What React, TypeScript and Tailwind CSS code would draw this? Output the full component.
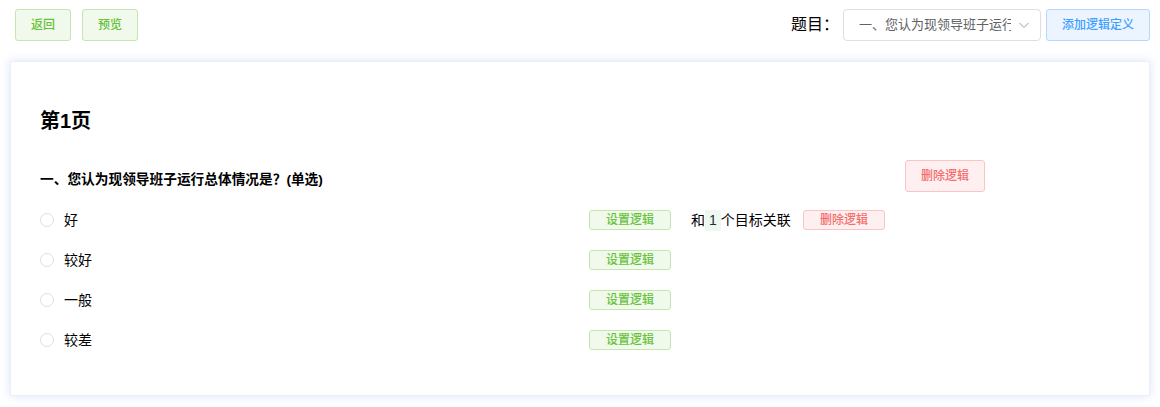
import React from 'react';

// Logic-definition editor: toolbar on top, one page card below with a
// single-choice question and its options. Button styles follow the
// Element UI "plain" palette (success / primary / danger).

interface Option {
  label: string;
  linked?: number;
}

const options: Option[] = [
  { label: '好', linked: 1 },
  { label: '较好' },
  { label: '一般' },
  { label: '较差' },
];

const font = "font-['Liberation_Sans','Noto_Sans_CJK_SC',sans-serif]";

function ChevronDown() {
  return (
    <svg width="14" height="14" viewBox="0 0 14 14" fill="none">
      <path d="M2.5 5 L7 9.5 L11.5 5" stroke="#c0c4cc" strokeWidth="1.1" />
    </svg>
  );
}

function SetLogicButton() {
  return (
    <button className="w-[82px] h-[20px] rounded-[3px] border border-[#c2e7b0] bg-[#f0f9eb] text-[12px] font-medium leading-none text-[#67c23a]">
      设置逻辑
    </button>
  );
}

export default function App() {
  return (
    <div className={`${font} bg-white w-[1160px] h-[407px]`}>
      <div className="flex items-center justify-between pl-[15px] pr-[10px] pt-[9px]">
        <div className="flex gap-[11px]">
          <button className="w-[56px] h-[32px] rounded-[3px] border border-[#c2e7b0] bg-[#f0f9eb] text-[12px] font-medium text-[#67c23a]">
            返回
          </button>
          <button className="w-[56px] h-[32px] rounded-[3px] border border-[#c2e7b0] bg-[#f0f9eb] text-[12px] font-medium text-[#67c23a]">
            预览
          </button>
        </div>
        <div className="flex items-center">
          <span className="text-[16px] text-black mr-[4px]">题目：</span>
          <div className="relative w-[198px] h-[32px] rounded-[4px] border border-[#dcdfe6] bg-white flex items-center">
            <div className="ml-[15px] w-[152px] overflow-hidden whitespace-nowrap text-[13px] text-[#606266]">
              一、您认为现领导班子运行总体情况是？
            </div>
            <span className="absolute right-[9px] top-[8px]">
              <ChevronDown />
            </span>
          </div>
          <button className="ml-[5px] w-[104px] h-[32px] rounded-[3px] border border-[#b3d8ff] bg-[#ecf5ff] text-[12px] font-medium text-[#409eff]">
            添加逻辑定义
          </button>
        </div>
      </div>

      <div className="mt-[20px] ml-[10px] w-[1140px] bg-white border border-[#eceff8] shadow-[0_0_9px_0_rgba(72,110,230,0.2)] pl-[29px] pt-[45px] pb-[45px]">
        <h2 className="text-[20px] leading-[28px] font-bold text-black">第1页</h2>

        <div className="mt-[25px] flex items-center h-[32px]">
          <div className="w-[865px] pt-[8px] text-[13.7px] leading-[20px] font-bold text-black whitespace-nowrap">
            一、您认为现领导班子运行总体情况是？(单选)
          </div>
          <button className="w-[80px] h-[32px] rounded-[3px] border border-[#fbc4c4] bg-[#fef0f0] text-[12px] font-medium text-[#f56c6c]">
            删除逻辑
          </button>
        </div>

        <div className="mt-[18px] flex flex-col gap-[20px]">
          {options.map((opt) => (
            <div key={opt.label} className="flex items-center h-[20px]">
              <div className="w-[549px] flex items-center">
                <span className="w-[14px] h-[14px] rounded-full border border-[#dcdfe6] bg-white" />
                <span className="ml-[10px] text-[14px] text-black">{opt.label}</span>
              </div>
              <SetLogicButton />
              {opt.linked ? (
                <>
                  <span className="ml-[20px] w-[97px] whitespace-nowrap text-[14px] text-black flex items-center">
                    和<span className="px-[4px] bg-[#eef8f0] text-[#1f2d3d]">{opt.linked}</span>个目标关联
                  </span>
                  <button className="ml-[15px] w-[82px] h-[20px] rounded-[3px] border border-[#fbc4c4] bg-[#fef0f0] text-[12px] font-medium leading-none text-[#f56c6c]">
                    删除逻辑
                  </button>
                </>
              ) : null}
            </div>
          ))}
        </div>
      </div>
    </div>
  );
}
